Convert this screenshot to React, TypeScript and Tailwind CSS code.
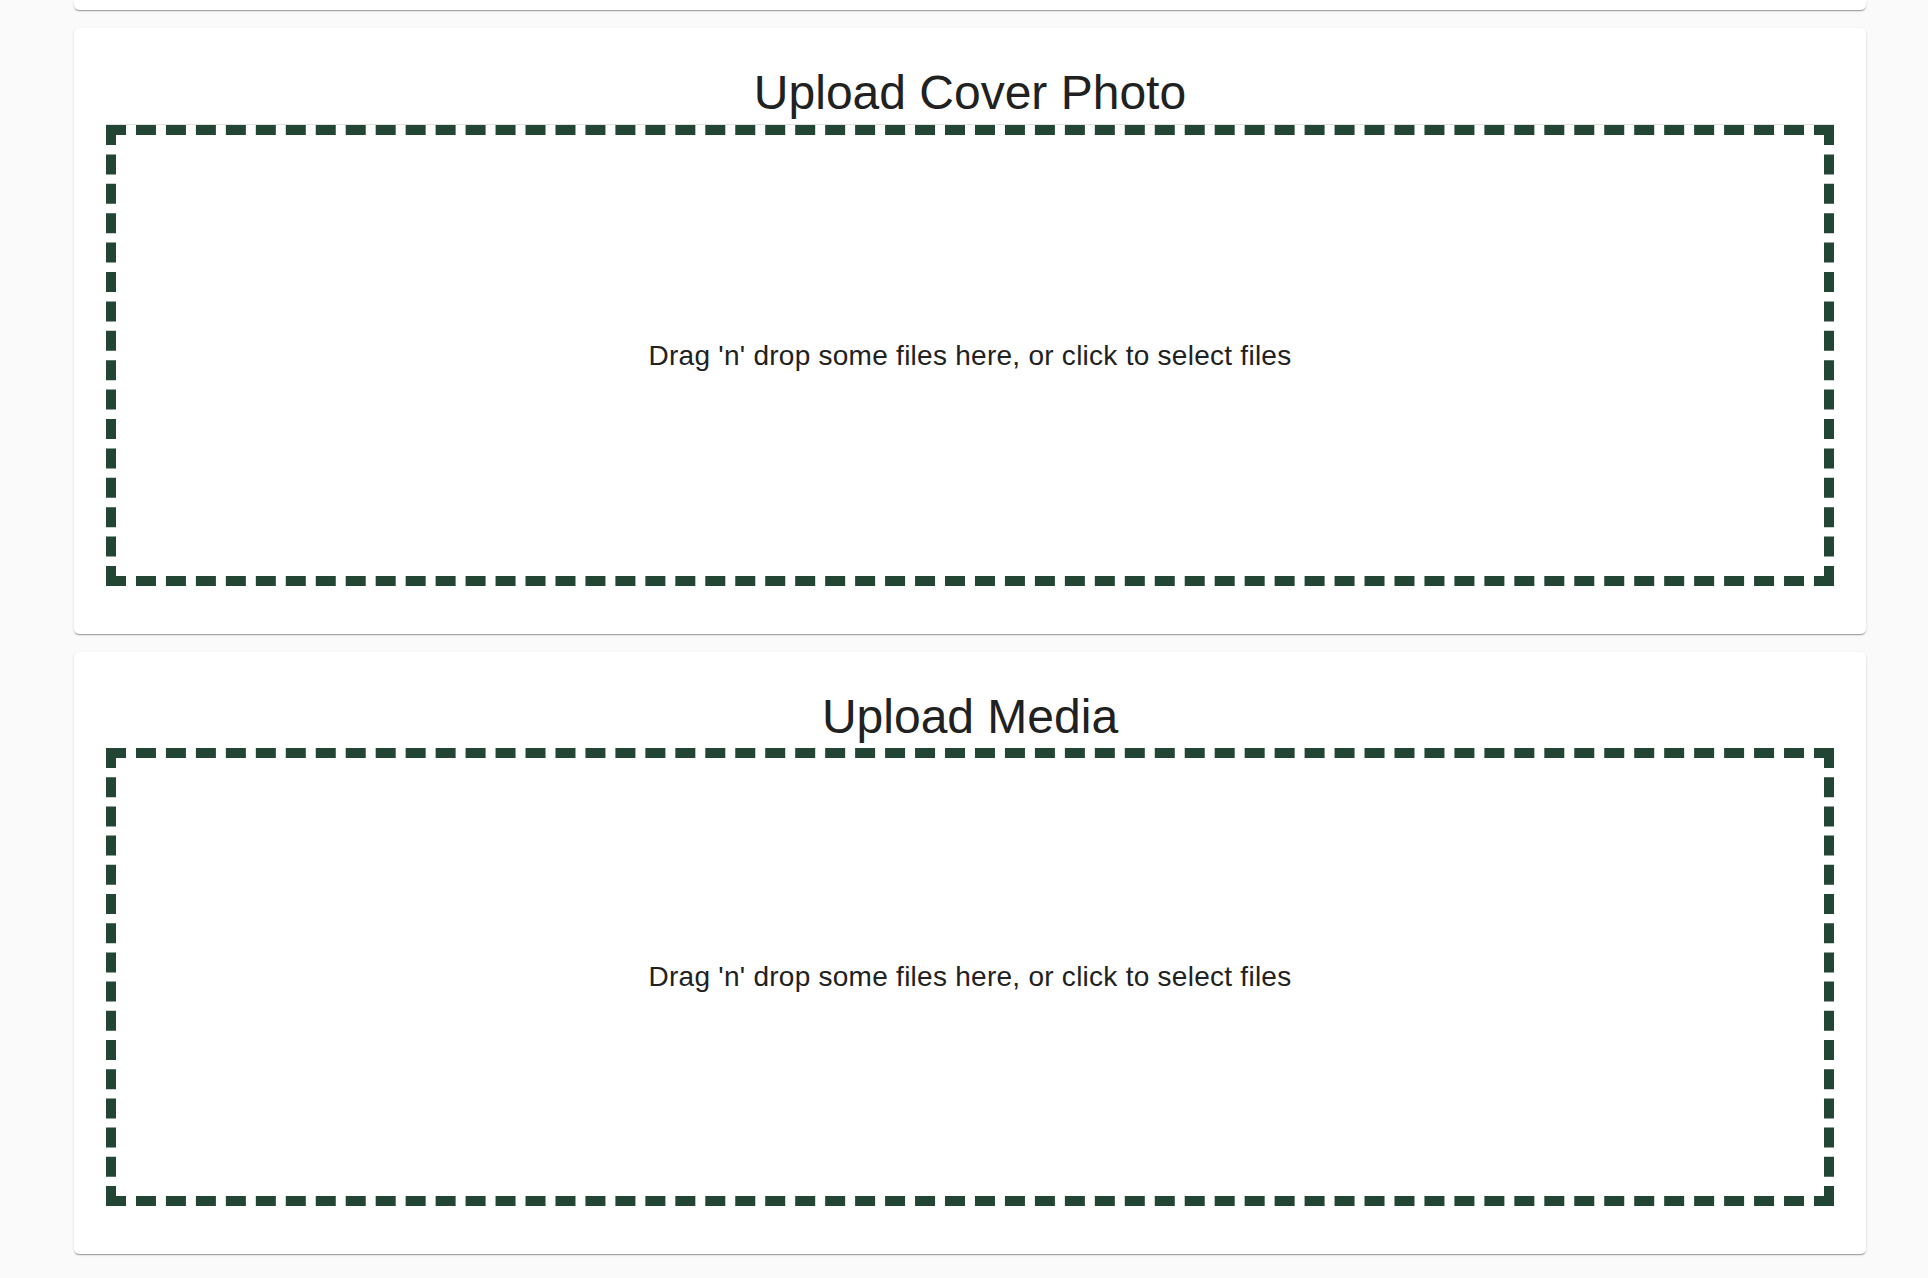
import React from "react";

const cardShadow =
  "shadow-[0px_2px_1px_-1px_rgba(0,0,0,0.2),0px_1px_1px_0px_rgba(0,0,0,0.14),0px_1px_3px_0px_rgba(0,0,0,0.12)]";

interface UploadCardProps {
  title: string;
  // cover photo dropzone carries a thin focus line on top
  focused?: boolean;
}

function UploadCard({ title, focused = false }: UploadCardProps) {
  return (
    <section className={`bg-white rounded-[5px] ${cardShadow} px-[32px] pt-[37px] pb-[48px]`}>
      <h3 className="text-center text-[48px] leading-[56px] font-normal text-[#212121]">
        {title}
      </h3>
      <div className={`mt-[3px] ${focused ? "border-t border-[#e0e0e0]" : ""}`}>
        <div
          className={`flex items-center justify-center border-[10px] border-dashed border-[#234634] cursor-pointer ${
            focused ? "h-[461px]" : "h-[458px]"
          }`}
        >
          <p className="text-[28px] leading-[1.5] tracking-[0.00938em] text-[#212121]">
            Drag 'n' drop some files here, or click to select files
          </p>
        </div>
      </div>
    </section>
  );
}

export default function App() {
  return (
    <div
      className="min-h-screen bg-[#fafafa] pl-[74px] pr-[62px]"
      style={{ fontFamily: '"Liberation Sans", Arial, Helvetica, sans-serif' }}
    >
      {/* tail of the card above, scrolled out of view */}
      <div className={`h-[10px] bg-white rounded-b-[5px] ${cardShadow}`} />

      <div className="mt-[18px] flex flex-col gap-[18px]">
        <UploadCard title="Upload Cover Photo" focused />
        <UploadCard title="Upload Media" />
      </div>
    </div>
  );
}
